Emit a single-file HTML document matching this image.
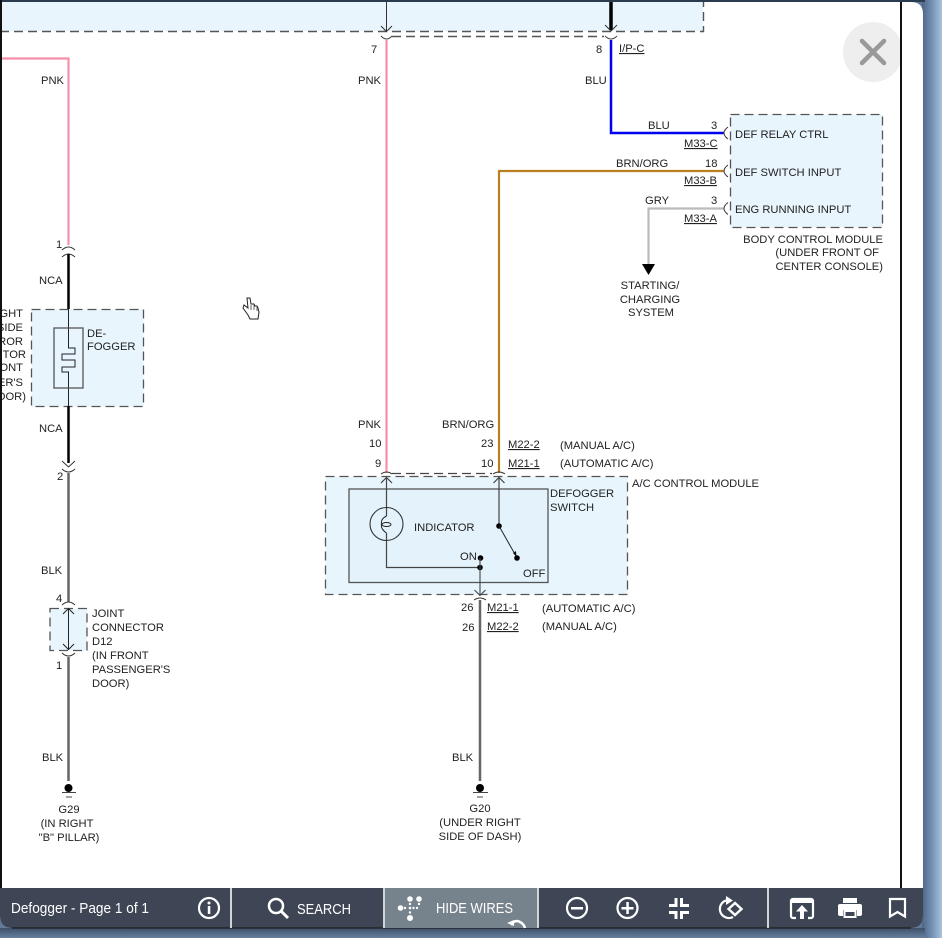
<!DOCTYPE html>
<html>
<head>
<meta charset="utf-8">
<style>
html,body{margin:0;padding:0;width:942px;height:938px;overflow:hidden;background:#5f7b9c}
svg{position:absolute;left:0;top:0;display:block}
text{font-family:"Liberation Sans",Arial,sans-serif;font-size:11.2px;fill:#222}
.u{text-decoration:underline}
.t{fill:#fff;font-size:14.5px}
</style>
</head>
<body>
<svg width="942" height="938" viewBox="0 0 942 938" xmlns="http://www.w3.org/2000/svg">
<defs>
<linearGradient id="rg" x1="0" x2="1" y1="0" y2="0">
<stop offset="0" stop-color="#4d6684"/><stop offset=".5" stop-color="#7591b3"/><stop offset="1" stop-color="#a9c3e0"/>
</linearGradient>
<linearGradient id="bg" x1="0" x2="0" y1="0" y2="1">
<stop offset="0" stop-color="#3f5068"/><stop offset="1" stop-color="#67809f"/>
</linearGradient>
<clipPath id="cc"><rect x="830" y="10" width="71" height="90"/></clipPath>
</defs>
<!-- outer background -->
<rect x="0" y="0" width="942" height="938" fill="#5f7b9c"/>
<rect x="922" y="0" width="20" height="938" fill="url(#rg)"/>
<rect x="0" y="928" width="925" height="10" fill="url(#bg)"/>
<rect x="0" y="0" width="925" height="2" fill="#2b3b50"/>
<!-- modal -->
<path d="M0 2H911Q923 2 923 14V916Q923 928 911 928H12Q0 928 0 916Z" fill="#fff"/>

<!-- top module -->
<rect x="2" y="2" width="701" height="29" fill="#e8f5fd"/>
<path d="M0 31.500H703.500V2" fill="none" stroke="#555" stroke-width="1.400" stroke-dasharray="9 5"/>
<path d="M392 36.500H604" fill="none" stroke="#555" stroke-width="1.400" stroke-dasharray="9 5"/>
<path d="M386.500 2V31M381 26l5.500 5.500L392 26" fill="none" stroke="#333" stroke-width="1"/>
<path d="M611 2V30" stroke="#000" stroke-width="3.500" fill="none"/>
<path d="M605 25l6 6 6-6" stroke="#333" fill="none"/>
<path d="M381 36q5.500 6 11 0M605 36q6 6 12 0" fill="none" stroke="#444"/>

<!-- pink wires -->
<path d="M0 58.500H68.500V245" fill="none" stroke="#f78fab" stroke-width="2.200"/>
<path d="M386.500 40V473" fill="none" stroke="#f78fab" stroke-width="2.200"/>
<!-- blue -->
<path d="M611 40V133H723.500" fill="none" stroke="#0000f0" stroke-width="2.500"/>
<!-- brn/org -->
<path d="M499 473V171H723.500" fill="none" stroke="#b8801f" stroke-width="2.200"/>
<!-- gry -->
<path d="M723.500 208.500H648.500V265" fill="none" stroke="#bbb" stroke-width="2.200"/>
<path d="M642 264h13l-6.500 11z" fill="#000"/>

<!-- BCM box -->
<rect x="730.500" y="114.500" width="152" height="113" fill="#e8f5fd" stroke="#555" stroke-width="1.300" stroke-dasharray="9 5"/>
<path d="M728 127q-8 6 0 12M728 165q-8 6 0 12M728 202.500q-8 6 0 12" fill="none" stroke="#333"/>
<text x="735" y="138">DEF RELAY CTRL</text>
<text x="735" y="176">DEF SWITCH INPUT</text>
<text x="735" y="213">ENG RUNNING INPUT</text>
<text x="883" y="243" text-anchor="end">BODY CONTROL MODULE</text>
<text x="879" y="256" text-anchor="end">(UNDER FRONT OF</text>
<text x="883" y="270" text-anchor="end">CENTER CONSOLE)</text>
<text x="648" y="129">BLU</text><text x="711" y="129">3</text>
<text class="u" x="684" y="147">M33-C</text>
<text x="616" y="167">BRN/ORG</text><text x="705" y="167">18</text>
<text class="u" x="684" y="184">M33-B</text>
<text x="645" y="204">GRY</text><text x="711" y="204">3</text>
<text class="u" x="684" y="222">M33-A</text>
<text x="650" y="289" text-anchor="middle">STARTING/</text>
<text x="650" y="303" text-anchor="middle">CHARGING</text>
<text x="651" y="316" text-anchor="middle">SYSTEM</text>

<!-- top labels -->
<text x="371" y="53">7</text>
<text x="596" y="53">8</text>
<text class="u" x="619" y="52">I/P-C</text>
<text x="358" y="84">PNK</text>
<text x="585" y="84">BLU</text>
<text x="41" y="84">PNK</text>

<!-- left column -->
<text x="56" y="248">1</text>
<path d="M62 250q6.500-6 13 0M62 257q6.500-6 13 0" fill="none" stroke="#333"/>
<rect x="31.500" y="309.500" width="112" height="97" fill="#e8f5fd" stroke="#555" stroke-width="1.300" stroke-dasharray="9 5"/>
<path d="M68.500 254V309M68.500 406V463" stroke="#000" stroke-width="2.500" fill="none"/>
<path d="M68.500 309V348H75V354H62V360H75V367H62V372H68.500V406" fill="none" stroke="#222" stroke-width="1"/>
<rect x="54" y="328" width="29" height="60" fill="none" stroke="#555" stroke-width="1.300"/>
<text x="87" y="337">DE-</text>
<text x="87" y="350">FOGGER</text>
<text x="39" y="284">NCA</text>
<text x="39" y="432">NCA</text>
<g text-anchor="end">
<text x="23" y="317">GHT</text>
<text x="23" y="331">SIDE</text>
<text x="23" y="345">ROR</text>
<text x="26" y="358">OTOR</text>
<text x="23" y="371">ONT</text>
<text x="23" y="386">ER'S</text>
<text x="26" y="400">OOR)</text>
</g>
<path d="M62 461l6.500 6 6.500-6M62 469q6.500 6 13 0" fill="none" stroke="#333"/>
<text x="57" y="480">2</text>
<path d="M68.500 473V602" stroke="#666" stroke-width="2.500" fill="none"/>
<text x="41" y="574">BLK</text>
<text x="56" y="602">4</text>
<path d="M62 605q6.500-6 13 0" fill="none" stroke="#333"/>
<rect x="50" y="608.500" width="37" height="42" fill="#e8f5fd" stroke="#555" stroke-width="1.300" stroke-dasharray="9 5"/>
<path d="M68.500 608V650M63 614l5.500-5.500L74 614M63 644l5.500 5.500L74 644" fill="none" stroke="#222"/>
<path d="M62 653q6.500 6 13 0" fill="none" stroke="#333"/>
<text x="56" y="669">1</text>
<path d="M68.500 657V781" stroke="#666" stroke-width="2.500" fill="none"/>
<text x="92" y="617">JOINT</text>
<text x="92" y="631">CONNECTOR</text>
<text x="92" y="645">D12</text>
<text x="92" y="659">(IN FRONT</text>
<text x="92" y="673">PASSENGER'S</text>
<text x="92" y="687">DOOR)</text>
<text x="42" y="761">BLK</text>
<circle cx="68.500" cy="788" r="4" fill="#000"/>
<path d="M62 792.500H76M66 797H72" stroke="#444" fill="none"/>
<text x="69" y="813" text-anchor="middle">G29</text>
<text x="67" y="827" text-anchor="middle">(IN RIGHT</text>
<text x="69" y="841" text-anchor="middle">"B" PILLAR)</text>

<!-- cursor -->
<path d="M248 315L243 308L244 305L248 308L247 298L250 298L251 304L254 304L255 306L257 306L258 308L259 312L258 319H250Z" fill="#fff" stroke="#222" stroke-width="1"/>
<path d="M251 305V310M254 305V310M257 307V311" stroke="#222" stroke-width=".7"/>

<!-- AC module -->
<rect x="325.500" y="476.500" width="302" height="118" fill="#e8f5fd" stroke="#555" stroke-width="1.300" stroke-dasharray="9 5"/>
<path d="M392 473.500H492" stroke="#444" stroke-width="1.200" stroke-dasharray="9 5" fill="none"/>
<rect x="349" y="489" width="199" height="93.500" fill="#e3f2fb" stroke="#555" stroke-width="1.300"/>
<path d="M381 474q5.500-4 11 0M493 474q6-4 12 0" fill="none" stroke="#333"/>
<path d="M386.500 477V516M386.500 533V567.500H480M381 483l5.500-5.500L392 483M499 477V526M493.500 483l5.500-5.500L504.500 483" fill="none" stroke="#444" stroke-width="1.200"/>
<circle cx="386.500" cy="524" r="16.500" fill="none" stroke="#333" stroke-width="1.100"/>
<path d="M386.500 516q-6 3-5 8q-1 5 5 9" fill="none" stroke="#222"/>
<ellipse cx="386.500" cy="524.500" rx="4.500" ry="2" fill="none" stroke="#222"/>
<text x="414" y="531">INDICATOR</text>
<text x="550" y="497">DEFOGGER</text>
<text x="550" y="511">SWITCH</text>
<text x="460" y="560">ON</text>
<text x="523" y="577">OFF</text>
<circle cx="499" cy="526" r="2.800" fill="#000"/>
<circle cx="517" cy="558" r="2.800" fill="#000"/>
<circle cx="480.500" cy="558" r="2.800" fill="#000"/>
<circle cx="480" cy="567.500" r="2.800" fill="#000"/>
<path d="M499 526L516 556" stroke="#222" fill="none"/>
<path d="M513 553l3.500 4 -.5-6z" fill="#111"/>
<path d="M480 558V594M474.500 590l5.500 5.500 5.500-5.500" fill="none" stroke="#444" stroke-width="1.100"/>
<path d="M474 600q6-4 12 0" fill="none" stroke="#333"/>
<path d="M480 600V781" stroke="#666" stroke-width="2.500" fill="none"/>

<text x="358" y="428">PNK</text>
<text x="369" y="447">10</text>
<text x="375" y="467">9</text>
<text x="442" y="428">BRN/ORG</text>
<text x="481" y="447">23</text>
<text x="481" y="467">10</text>
<text class="u" x="508" y="448">M22-2</text>
<text class="u" x="508" y="467">M21-1</text>
<text x="560" y="449">(MANUAL A/C)</text>
<text x="560" y="467">(AUTOMATIC A/C)</text>
<text x="632" y="487">A/C CONTROL MODULE</text>
<text x="461" y="611">26</text>
<text x="462" y="631">26</text>
<text class="u" x="487" y="611">M21-1</text>
<text class="u" x="487" y="630">M22-2</text>
<text x="542" y="612">(AUTOMATIC A/C)</text>
<text x="542" y="630">(MANUAL A/C)</text>
<text x="452" y="761">BLK</text>
<circle cx="480" cy="788" r="4" fill="#000"/>
<path d="M473 792.500H488M477 797H483" stroke="#444" fill="none"/>
<text x="480" y="812" text-anchor="middle">G20</text>
<text x="480" y="826" text-anchor="middle">(UNDER RIGHT</text>
<text x="480" y="840" text-anchor="middle">SIDE OF DASH)</text>

<!-- close -->
<circle cx="873" cy="52" r="30" fill="#eeeeee" clip-path="url(#cc)"/>
<path d="M862 41L884 63M884 41L862 63" stroke="#999" stroke-width="4.500" stroke-linecap="round" fill="none"/>

<!-- frame lines -->
<rect x="0" y="0" width="2" height="888" fill="#111"/>
<rect x="900" y="2" width="2" height="886" fill="#111"/>

<!-- toolbar -->
<path d="M0 888H923V916Q923 928 911 928H12Q0 928 0 916Z" fill="#3e4655"/>
<path d="M12 928H911" stroke="#111" stroke-width="1"/>
<rect x="384" y="888" width="153" height="40" fill="#77838c"/>
<rect x="230" y="888" width="2" height="40" fill="#d2d4d6"/>
<rect x="383" y="888" width="2" height="40" fill="#d2d4d6"/>
<rect x="537" y="888" width="2" height="40" fill="#d2d4d6"/>
<rect x="767" y="888" width="2" height="40" fill="#d2d4d6"/>
<text class="t" x="11" y="913" textLength="138" lengthAdjust="spacingAndGlyphs">Defogger - Page 1 of 1</text>
<circle cx="209" cy="908" r="10" fill="none" stroke="#fff" stroke-width="2.200"/>
<circle cx="209" cy="903" r="1.500" fill="#fff"/>
<rect x="207.800" y="906" width="2.500" height="8" fill="#fff"/>
<!-- search -->
<circle cx="276" cy="906" r="7" fill="none" stroke="#fff" stroke-width="2.500"/>
<path d="M281 911L288 918" stroke="#fff" stroke-width="3" fill="none"/>
<text class="t" x="297" y="914" textLength="54" lengthAdjust="spacingAndGlyphs">SEARCH</text>
<!-- hide wires -->
<g fill="#fff">
<circle cx="400.500" cy="908" r="2.800"/><circle cx="410" cy="899" r="2.800"/><circle cx="419" cy="899" r="2.800"/><circle cx="410" cy="918" r="3"/>
<circle cx="405" cy="908" r="1.200"/><circle cx="410" cy="908" r="1.300"/><circle cx="413.500" cy="908" r="1.200"/><circle cx="417" cy="908" r="1.200"/><circle cx="419" cy="904" r="1.200"/><circle cx="410" cy="904" r="1.200"/><circle cx="410" cy="912.500" r="1.200"/>
</g>
<text class="t" x="436" y="913" textLength="77" lengthAdjust="spacingAndGlyphs">HIDE WIRES</text>
<path d="M511 925q4-6 9-3q4 2 5 6" fill="none" stroke="#fff" stroke-width="2.500"/>
<path d="M507 923l7-3 0 6z" fill="#fff"/>
<!-- minus -->
<circle cx="577" cy="908" r="10" fill="none" stroke="#fff" stroke-width="2.200"/>
<rect x="571" y="907" width="12" height="2.500" fill="#fff"/>
<!-- plus -->
<circle cx="627.500" cy="908" r="10" fill="none" stroke="#fff" stroke-width="2.200"/>
<rect x="621.500" y="907" width="12" height="2.500" fill="#fff"/>
<rect x="626.300" y="902" width="2.500" height="12" fill="#fff"/>
<!-- compress -->
<path d="M676 898V905.500H669M681.500 898V905.500H689M676 919V912.500H669M681.500 919V912.500H689" fill="none" stroke="#fff" stroke-width="3"/>
<!-- rotate -->
<path d="M729 900a9 9 0 1 0 4 17" fill="none" stroke="#fff" stroke-width="2.200"/>
<path d="M726 896l7 4.500-7 4.500z" fill="#fff"/>
<path d="M728.500 909l6.500-6 6.500 6-6.500 6z" fill="none" stroke="#fff" stroke-width="2.400"/>
<!-- upload -->
<path d="M796 918H793a2 2 0 0 1-2-2V901a2 2 0 0 1 2-2H811a2 2 0 0 1 2 2V916a2 2 0 0 1-2 2H808" fill="none" stroke="#fff" stroke-width="2.200"/>
<rect x="791" y="899" width="22" height="4" fill="#fff"/>
<path d="M802 905l-6 6.500H800V919H804V911.500H808z" fill="#fff"/>
<!-- print -->
<rect x="843" y="898" width="14" height="5" fill="#fff"/>
<path d="M838 906a2 2 0 0 1 2-2H860a2 2 0 0 1 2 2V914a2 2 0 0 1-2 2H857V910H843V916H840a2 2 0 0 1-2-2Z" fill="#fff"/>
<rect x="844.500" y="911" width="11" height="6" fill="#3e4655" stroke="#fff" stroke-width="2"/>
<!-- bookmark -->
<path d="M890 899H905V916.500L897.500 912L890 916.500Z" fill="none" stroke="#fff" stroke-width="2.200"/>
</svg>
</body>
</html>
